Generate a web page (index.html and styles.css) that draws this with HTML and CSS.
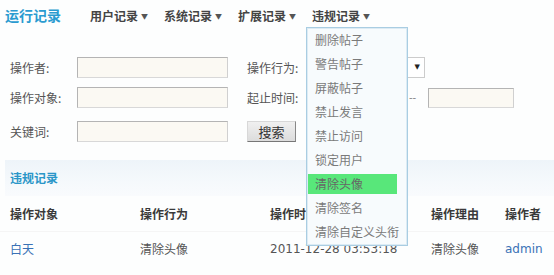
FILE: index.html
```html
<!DOCTYPE html>
<html>
<head>
<meta charset="utf-8">
<link rel="stylesheet" href="styles.css">
</head>
<body>
<div class="page">
  <div class="topbar">
    <div class="title">运行记录</div>
    <ul class="nav">
      <li>用户记录<span class="arr">▼</span></li>
      <li>系统记录<span class="arr">▼</span></li>
      <li>扩展记录<span class="arr">▼</span></li>
      <li class="open">违规记录<span class="arr">▼</span>
        <ul class="menu">
          <li>删除帖子</li>
          <li>警告帖子</li>
          <li>屏蔽帖子</li>
          <li>禁止发言</li>
          <li>禁止访问</li>
          <li>锁定用户</li>
          <li class="hl">清除头像</li>
          <li>清除签名</li>
          <li>清除自定义头衔</li>
        </ul>
      </li>
    </ul>
  </div>

  <div class="form">
    <div class="row r1">
      <span class="lbl">操作者:</span><span class="inp"></span>
      <span class="lbl2">操作行为:</span><span class="sel"><span class="selarr">▼</span></span>
    </div>
    <div class="row r2">
      <span class="lbl">操作对象:</span><span class="inp"></span>
      <span class="lbl2">起止时间:</span><span class="inp d1"></span><span class="dash">--</span><span class="inp d2"></span>
    </div>
    <div class="row r3">
      <span class="lbl">关键词:</span><span class="inp"></span>
      <span class="btn">搜索</span>
    </div>
  </div>

  <div class="section">违规记录</div>

  <div class="table">
    <div class="tr th">
      <span class="c1">操作对象</span><span class="c2">操作行为</span><span class="c3">操作时间</span><span class="c4">操作理由</span><span class="c5">操作者</span>
    </div>
    <div class="tr td">
      <span class="c1 link">白天</span><span class="c2">清除头像</span><span class="c3 num">2011-12-28 03:53:18</span><span class="c4">清除头像</span><span class="c5 link num">admin</span>
    </div>
  </div>
</div>
</body>
</html>
```

FILE: styles.css
```css
* { box-sizing: border-box; }
html, body { margin: 0; padding: 0; background: #fdfefe; }
body {
  font-family: "DejaVu Sans", "Noto Sans CJK SC", sans-serif;
  font-size: 12px;
  color: #555;
  width: 554px;
  height: 275px;
  overflow: hidden;
}
.page { position: relative; }

.topbar {
  display: flex;
  align-items: center;
  height: 30px;
  padding-left: 5px;
}
.title {
  font-family: "Noto Sans CJK SC", sans-serif;
  font-size: 14px;
  font-weight: bold;
  color: #2b9bd0;
  width: 85px;
}
.nav {
  display: flex;
  gap: 14px;
  list-style: none;
  margin: 0;
  padding: 0;
}
.nav > li {
  position: relative;
  font-family: "Noto Sans CJK SC", sans-serif;
  font-size: 12px;
  font-weight: bold;
  color: #444;
  width: 60px;
  white-space: nowrap;
}
.arr { font-size: 7px; margin-left: 3px; vertical-align: 2px; color: #555; }

.menu {
  position: absolute;
  left: -6px;
  top: 20px;
  width: 102px;
  height: 219px;
  margin: 0;
  padding: 2px 1px 0 1px;
  list-style: none;
  background: #f7fbfd;
  border: 1px solid #a9cde2;
  box-shadow: inset 0 0 0 1px #dcebf4;
  z-index: 10;
}
.menu li {
  height: 20px;
  line-height: 20px;
  margin-bottom: 4px;
  width: 89px;
  padding-left: 7px;
  font-weight: normal;
  color: #7a7a7a;
  font-size: 12px;
}
.menu li.hl { background: #58e77a; color: #666; }

.form { padding-left: 10px; }
.row { display: flex; align-items: center; }
.r1 { margin-top: 27px; height: 21px; }
.r2 { margin-top: 9px; height: 21px; }
.r3 { margin-top: 13px; height: 21px; }
.lbl, .lbl2 { font-family: "Noto Sans CJK SC", sans-serif; color: #555; }
.lbl { width: 67px; }
.lbl2 { width: 63px; margin-left: 19px; }
.inp {
  width: 151px;
  height: 21px;
  background: #fbf9f3;
  border: 1px solid #b4b4b4;
  border-right-color: #d0d0d0;
  border-bottom-color: #d8d8d8;
}
.inp.d1 { width: 90px; }
.dash { width: 28px; padding-left: 9px; color: #888; font-size: 10px; }
.inp.d2 { width: 86px; height: 20px; }
.sel {
  width: 115px;
  height: 21px;
  border: 1px solid #ccc;
  background: #fff;
  position: relative;
}
.selarr {
  position: absolute;
  right: 4px;
  top: 5px;
  font-size: 7px;
  color: #222;
}
.btn {
  margin-left: 19px;
  width: 49px;
  height: 21px;
  line-height: 19px;
  text-align: center;
  font-family: "Noto Sans CJK SC", sans-serif;
  font-size: 13px;
  color: #333;
  background: linear-gradient(#f0f0f0, #dcdcdc);
  border: 1px solid #d8d8d8;
  border-bottom-color: #777;
  border-right-color: #888;
}

.section {
  margin: 18px 0 0 5px;
  height: 36px;
  line-height: 36px;
  padding-left: 5px;
  background: linear-gradient(#eef4f9, #f5f9fc 60%, #f9fbfd);
  font-family: "Noto Sans CJK SC", sans-serif;
  font-weight: bold;
  color: #2a96c8;
}

.tr { display: flex; padding-left: 10px; }
.th {
  height: 36px;
  line-height: 36px;
  font-family: "Noto Sans CJK SC", sans-serif;
  font-weight: bold;
  color: #3a3a3a;
  border-bottom: 1px solid #f5f5f5;
}
.td { height: 34px; line-height: 34px; font-family: "Noto Sans CJK SC", sans-serif; color: #555; }
.c1, .c2 { width: 130px; }
.c3 { width: 161px; }
.c4 { width: 74px; }
.num { font-family: "DejaVu Sans", sans-serif; font-size: 12px; }
.link { color: #3a72b6; }
```
